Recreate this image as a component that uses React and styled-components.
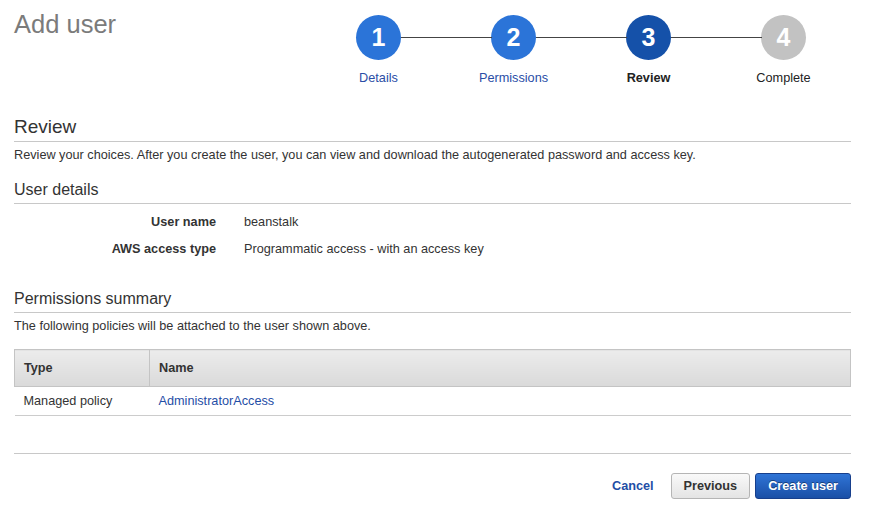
import React from "react";
import styled, { createGlobalStyle } from "styled-components";

const Global = createGlobalStyle`
  html, body { margin: 0; padding: 0; background: #fff; }
  body { font-family: "Liberation Sans", Arial, Helvetica, sans-serif; color: #333; }
`;

const Page = styled.div`
  padding: 0 21px 0 14px;
`;

const Header = styled.header`
  display: flex;
  justify-content: space-between;
  align-items: flex-start;
`;

const Title = styled.h1`
  margin: 0;
  padding-top: 9px;
  font-size: 25.5px;
  line-height: 30px;
  font-weight: 400;
  color: #7b7b7b;
`;

const Steps = styled.ol`
  display: grid;
  grid-template-columns: repeat(4, 135px);
  margin: 0;
  padding: 15px 0 0;
  list-style: none;
`;

const Step = styled.li`
  position: relative;
  display: flex;
  flex-direction: column;
  align-items: center;
  &:not(:first-child)::before {
    content: "";
    position: absolute;
    top: 22px;
    left: calc(-50% + 22px);
    width: 91px;
    height: 1px;
    background: #444;
  }
`;

const circleColors = {
  done: "#2b74d8",
  current: "#1551a9",
  todo: "#c2c2c2",
};

const Circle = styled.div`
  width: 45px;
  height: 45px;
  border-radius: 50%;
  background: ${(p) => circleColors[p.$state]};
  color: #fff;
  display: flex;
  align-items: center;
  justify-content: center;
  font-size: 25px;
  font-weight: 700;
`;

const StepLabel = styled.span`
  margin-top: 10px;
  font-size: 12.7px;
  line-height: 16px;
  color: ${(p) => (p.$state === "done" ? "#2a4ea6" : "#222")};
  font-weight: ${(p) => (p.$state === "current" ? 700 : 400)};
`;

const H2 = styled.h2`
  margin: 29px 0 0;
  padding-bottom: 3px;
  border-bottom: 1px solid #c8c8c8;
  font-size: 19px;
  line-height: 23px;
  font-weight: 400;
  color: #333;
`;

const H3 = styled.h3`
  margin: ${(p) => p.$mt}px 0 0;
  padding-bottom: 3px;
  border-bottom: 1px solid #c8c8c8;
  font-size: 16px;
  line-height: 20px;
  font-weight: 400;
  color: #333;
`;

const Desc = styled.p`
  margin: 4px 0 0;
  font-size: 12.7px;
  line-height: 18px;
  color: #333;
`;

const Details = styled.dl`
  display: grid;
  grid-template-columns: 202px 1fr;
  column-gap: 28px;
  row-gap: 9px;
  margin: 9px 0 0;
  font-size: 12.7px;
  line-height: 18px;
`;

const Term = styled.dt`
  text-align: right;
  font-weight: 700;
  color: #333;
`;

const Value = styled.dd`
  margin: 0;
  color: #333;
`;

const Table = styled.table`
  width: 100%;
  margin-top: 14px;
  border-collapse: collapse;
  font-size: 12.7px;
`;

const Th = styled.th`
  height: 37px;
  padding: 0 9px;
  text-align: left;
  font-weight: 700;
  color: #333;
  background: linear-gradient(#ececec, #dadada);
  border: 1px solid #c4c4c4;
  width: ${(p) => p.$w || "auto"};
  box-sizing: border-box;
`;

const Td = styled.td`
  height: 28px;
  padding: 0 9px;
  border-bottom: 1px solid #cccccc;
  color: #333;
`;

const Link = styled.a`
  color: #1f4ea6;
  text-decoration: none;
`;

const Footer = styled.div`
  margin-top: 37px;
  border-top: 1px solid #c8c8c8;
  padding-top: 19px;
  display: flex;
  justify-content: flex-end;
  align-items: center;
`;

const CancelLink = styled.a`
  font-size: 12.7px;
  font-weight: 700;
  color: #1f4ea6;
  margin-right: 17px;
  text-decoration: none;
`;

const Button = styled.button`
  height: 26px;
  padding: 0 12px;
  font-family: inherit;
  font-size: 12.7px;
  font-weight: 700;
  border-radius: 3px;
  margin-left: ${(p) => (p.$primary ? "5px" : "0")};
  color: ${(p) => (p.$primary ? "#fff" : "#333")};
  text-shadow: ${(p) => (p.$primary ? "0 -1px 0 rgba(0,0,0,0.4)" : "none")};
  background: ${(p) =>
    p.$primary
      ? "linear-gradient(#2f74d6, #1a4fa6)"
      : "linear-gradient(#f9f9f9, #e4e4e4)"};
  border: 1px solid ${(p) => (p.$primary ? "#173f8c" : "#b5b5b5")};
  cursor: pointer;
`;

const steps = [
  { n: 1, label: "Details", state: "done" },
  { n: 2, label: "Permissions", state: "done" },
  { n: 3, label: "Review", state: "current" },
  { n: 4, label: "Complete", state: "todo" },
];

export default function App() {
  return (
    <Page>
      <Global />
      <Header>
        <Title>Add user</Title>
        <Steps>
          {steps.map((s) => (
            <Step key={s.n}>
              <Circle $state={s.state}>{s.n}</Circle>
              <StepLabel $state={s.state}>{s.label}</StepLabel>
            </Step>
          ))}
        </Steps>
      </Header>

      <H2>Review</H2>
      <Desc>
        Review your choices. After you create the user, you can view and download the
        autogenerated password and access key.
      </Desc>

      <H3 $mt={16}>User details</H3>
      <Details>
        <Term>User name</Term>
        <Value>beanstalk</Value>
        <Term>AWS access type</Term>
        <Value>Programmatic access - with an access key</Value>
      </Details>

      <H3 $mt={31}>Permissions summary</H3>
      <Desc>The following policies will be attached to the user shown above.</Desc>

      <Table>
        <thead>
          <tr>
            <Th $w="135px">Type</Th>
            <Th>Name</Th>
          </tr>
        </thead>
        <tbody>
          <tr>
            <Td>Managed policy</Td>
            <Td>
              <Link href="#">AdministratorAccess</Link>
            </Td>
          </tr>
        </tbody>
      </Table>

      <Footer>
        <CancelLink href="#">Cancel</CancelLink>
        <Button>Previous</Button>
        <Button $primary>Create user</Button>
      </Footer>
    </Page>
  );
}
